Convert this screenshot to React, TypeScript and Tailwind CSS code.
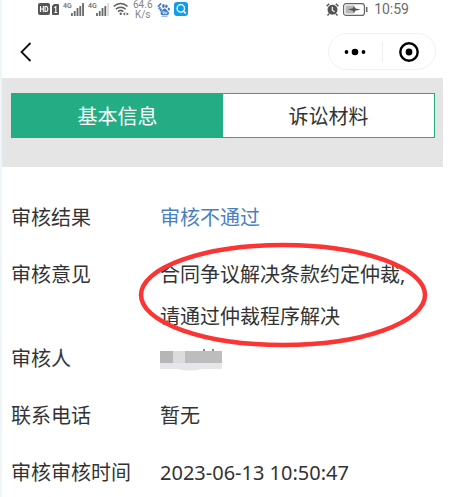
import type { ReactNode } from "react";

type Row = {
  label: string;
  value: ReactNode;
  className?: string;
};

function HdIcon() {
  return (
    <svg width="12" height="12" viewBox="0 0 12 12" fill="none">
      <rect width="12" height="12" rx="2" fill="#555" />
      <path d="M2.5 3v6M5.3 3v6M2.5 6h2.8M7 3.5v5h1c1.2 0 1.8-.9 1.8-2.5S9.200 3.500 8 3.500z" stroke="#fff" strokeWidth="1.1" />
    </svg>
  );
}

function SimIcon() {
  return (
    <svg width="7" height="11" viewBox="0 0 7 11" fill="none">
      <path d="M2 0h4q1 0 1 1v9q0 1-1 1H1q-1 0-1-1V2z" fill="#555" />
      <path d="M2.300 3.800l1.500-1V8.500M2.300 8.500h3" stroke="#fff" strokeWidth="1.1" />
    </svg>
  );
}

function SignalIcon({ weak = false }: { weak?: boolean }) {
  return (
    <svg width="13" height="13" viewBox="0 0 14 13" preserveAspectRatio="none">
      <g fill="#6b6b6b">
        <rect x="0" y="10" width="2" height="3" rx="0.5" />
        <rect x="3" y="8" width="2" height="5" rx="0.5" />
        <rect x="6" y="5" width="2" height="8" rx="0.5" />
        <rect x="9" y="3" width="2" height="10" rx="0.5" />
        <rect x="12" y="0" width="2" height="13" rx="0.5" fill={weak ? "#dcdcdc" : "#6b6b6b"} />
      </g>
    </svg>
  );
}

function WifiIcon() {
  return (
    <svg width="16" height="14" viewBox="0 0 17 14" fill="none" stroke="#5f5f5f" strokeWidth="1.6">
      <path d="M.8 4.300C5 .2 11.200.2 15.400 4.300M3 7.200c3-2.900 7.400-2.900 10.400 0M5.300 9.800c1.700-1.600 4.100-1.600 5.800 0" />
      <circle cx="8.200" cy="12" r="1.300" fill="#5f5f5f" stroke="none" />
      <path d="M10.500 12.200l2.400-1.800v3.600zM16.800 12.200l-2.400-1.800v3.600z" fill="#5f5f5f" stroke="none" />
    </svg>
  );
}

function PawIcon() {
  return (
    <svg width="13" height="15" viewBox="0 0 13 15" fill="#3d78c8">
      <path d="M.3 4.200L3.600.800l1 1.300-3 3.200z" />
      <path d="M1 6.200l2-1.800.8 1-1.800 2z" />
      <ellipse cx="6.400" cy="4" rx="1.300" ry="1.900" />
      <ellipse cx="9.400" cy="4.300" rx="1.200" ry="1.800" />
      <ellipse cx="11.800" cy="7" rx="1.100" ry="1.600" />
      <ellipse cx="3.700" cy="7.800" rx="1.200" ry="1.600" />
      <path d="M7.700 6.500c1.600 0 2 1.700 3.300 2.800 1.800 1.600.9 4-1.200 4-1 0-3.200 0-4.200 0-2.100 0-2.700-2.500-1.100-4C5.800 8.100 6.200 6.500 7.700 6.500z" />
      <path d="M6 9.700h1.200v2H6zM8.300 9.700v2h1.500v-2" fill="none" stroke="#fff" strokeWidth="0.700" />
      <path d="M4.500 14.500h6" stroke="#9fbce3" />
    </svg>
  );
}

function SearchAppIcon() {
  return (
    <svg width="14" height="14" viewBox="0 0 14 14" fill="none">
      <rect width="14" height="14" rx="3" fill="#149ce8" />
      <circle cx="6.800" cy="6.400" r="3.700" stroke="#fff" strokeWidth="1.300" />
      <path d="M9.300 9l2 2" stroke="#fff" strokeWidth="1.500" strokeLinecap="round" />
    </svg>
  );
}

function AlarmIcon() {
  return (
    <svg width="13" height="13" viewBox="0 0 13 13" fill="none">
      <circle cx="6.500" cy="6.800" r="5" fill="#555" />
      <path d="M.6 3.200L3.200.800M12.400 3.200L9.800.800M3 10.800l-1.500 1.700M10 10.800l1.500 1.700" stroke="#555" strokeWidth="1.400" />
      <path d="M6.300 3.800v3.400l2.200 1.500" stroke="#fff" strokeWidth="1.100" />
    </svg>
  );
}

function BatteryIcon() {
  return (
    <svg width="25" height="13" viewBox="0 0 25 13" fill="none">
      <rect x="0.600" y="0.600" width="20.800" height="11.800" rx="2.500" stroke="#666" strokeWidth="1.200" />
      <rect x="2.500" y="2.500" width="9" height="8" rx="1" fill="#b9b9b9" />
      <path d="M4.500 6.500l5.500-1.300.6-2.200 2 2.500 5 1-5.500 1.300-1 2.200-1.500-2.500z" fill="#555" />
      <path d="M23.700 4v5" stroke="#666" strokeWidth="1.600" />
    </svg>
  );
}

function NetworkLabel() {
  return <span className="w-2 self-start pt-0.5 font-[Roboto] text-[7px] leading-[8px] font-medium">4G</span>;
}

function StatusBar() {
  return (
    <div className="flex h-[22px] justify-between pr-[34px] pl-9 text-[#6b6b6b]">
      <div className="flex h-[18px] items-center">
        <HdIcon />
        <span className="ml-0.5 mr-1">
          <SimIcon />
        </span>
        <NetworkLabel />
        <SignalIcon />
        <span className="w-1" />
        <NetworkLabel />
        <SignalIcon weak />
        <span className="ml-1">
          <WifiIcon />
        </span>
        <span className="ml-1 self-start text-center font-[Roboto] text-[10px] leading-[10px] text-[#858585]">
          64.6
          <br />
          K/s
        </span>
        <span className="ml-1">
          <PawIcon />
        </span>
        <span className="ml-1">
          <SearchAppIcon />
        </span>
      </div>
      <div className="flex h-[18px] items-center">
        <AlarmIcon />
        <span className="ml-1">
          <BatteryIcon />
        </span>
        <span className="ml-1.5 font-[Roboto] text-[14px] leading-[18px]">10:59</span>
      </div>
    </div>
  );
}

function NavBar() {
  return (
    <header className="flex h-14 items-center justify-between pt-[3px] pr-[7px] pl-[18px]">
      <button type="button" aria-label="返回">
        <svg width="12" height="20" viewBox="0 0 12 20" fill="none" stroke="#111" strokeWidth="1.800">
          <path d="M10.500 1L1.500 10l9 9" />
        </svg>
      </button>
      <div className="flex h-[37px] w-[108px] items-center rounded-full border border-[#f1f1f1]">
        <button type="button" aria-label="更多" className="flex flex-1 justify-center">
          <svg width="22" height="8" viewBox="0 0 22 8">
            <circle cx="2.500" cy="4" r="1.900" />
            <circle cx="11" cy="4" r="3.300" />
            <circle cx="19.500" cy="4" r="1.900" />
          </svg>
        </button>
        <span className="h-5 w-px bg-[#eeeeee]" />
        <button type="button" aria-label="关闭" className="flex flex-1 justify-center">
          <svg width="20" height="20" viewBox="0 0 20 20">
            <circle cx="10" cy="10" r="8.700" fill="none" stroke="#000" strokeWidth="2.400" />
            <circle cx="10" cy="10" r="3.400" />
          </svg>
        </button>
      </div>
    </header>
  );
}

const rows: Row[] = [
  { label: "审核结果", value: <span className="text-[#4a7fc1]">审核不通过</span>, className: "pb-[15px]" },
  {
    label: "审核意见",
    value: (
      <>
        合同争议解决条款约定仲裁,
        <br />
        请通过仲裁程序解决
        <svg
          className="pointer-events-none absolute -top-3 -left-[22px]"
          width="290"
          height="106"
          viewBox="0 0 290 106"
          fill="none"
        >
          <ellipse cx="145" cy="53" rx="142" ry="50" stroke="#fb3434" strokeWidth="4.500" />
        </svg>
      </>
    ),
  },
  {
    label: "审核人",
    value: (
      <svg className="mt-[10px]" width="62" height="24" viewBox="0 0 62 24" role="img" aria-label="已隐藏">
        <path d="M0 3h13v12H0z" fill="#b6b6b6" />
        <path d="M13 3h12v12H13z" fill="#dcdcdc" />
        <path d="M25 3h37v12H25z" fill="#bdbdbd" />
        <path d="M43 1h2v2h-2zM52 1h2v2h-2z" fill="#888" />
        <path d="M0 15h62v6H42q-12 3-24 0H0z" fill="#e5e6ea" />
      </svg>
    ),
    className: "pb-[15px]",
  },
  { label: "联系电话", value: "暂无", className: "pb-[15px]" },
  { label: "审核审核时间", value: "2023-06-13 10:50:47" },
];

export default function App() {
  return (
    <div className="min-h-screen border-l-2 border-[#eef4f7] bg-white pr-[7px] font-['Noto_Sans','Noto_Sans_CJK_SC',sans-serif] text-[20px] text-[#333333]">
      <StatusBar />
      <NavBar />
      <nav className="bg-[#e5e5e5] pt-[15px] pr-2 pb-[29px] pl-[9px]">
        <div className="grid h-[45px] grid-cols-2 border border-[#24ad84] bg-white">
          <button type="button" className="bg-[#24ad84] pt-0.5 text-white">
            基本信息
          </button>
          <button type="button" className="pt-0.5">
            诉讼材料
          </button>
        </div>
      </nav>
      <dl className="pt-[30px] pl-[9px] leading-[42px]">
        {rows.map((row) => (
          <div key={row.label} className={`flex ${row.className ?? ""}`}>
            <dt className="w-[149px] shrink-0">{row.label}</dt>
            <dd className="relative flex-1 whitespace-nowrap">{row.value}</dd>
          </div>
        ))}
      </dl>
    </div>
  );
}
